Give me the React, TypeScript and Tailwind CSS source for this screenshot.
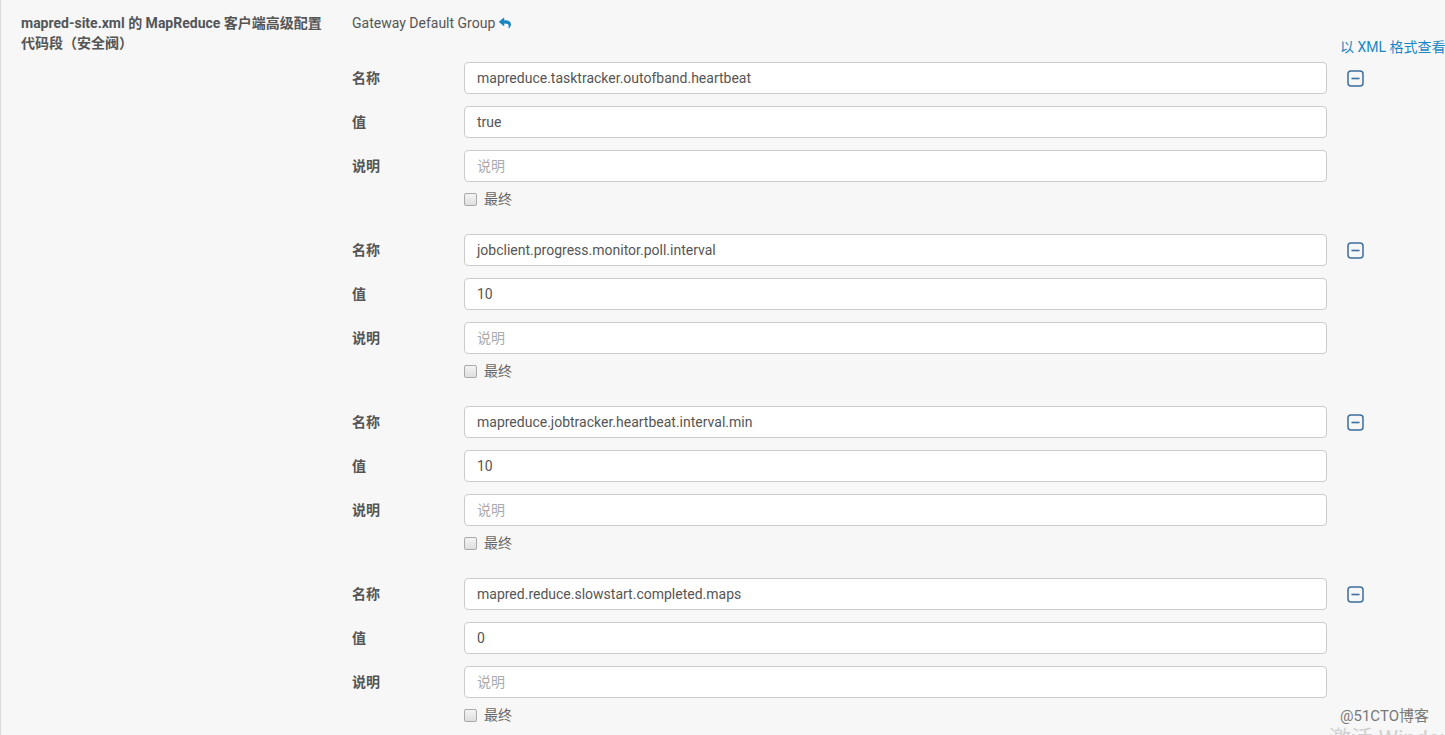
import { FaReply } from 'react-icons/fa';

type Entry = { name: string; value: string };

const entries: Entry[] = [
  { name: 'mapreduce.tasktracker.outofband.heartbeat', value: 'true' },
  { name: 'jobclient.progress.monitor.poll.interval', value: '10' },
  { name: 'mapreduce.jobtracker.heartbeat.interval.min', value: '10' },
  { name: 'mapred.reduce.slowstart.completed.maps', value: '0' },
];

function Field({ label, value, placeholder, action }: { label: string; value?: string; placeholder?: string; action?: boolean }) {
  return (
    <div className="flex items-center">
      <div className="w-[112px] text-[14px] font-bold text-[#555]">{label}</div>
      <div className="flex h-[32px] w-[863px] items-center rounded-[4px] border border-[#ccc] bg-white px-[12px] text-[14px]">
        {value ? <span className="text-[#555]">{value}</span> : <span className="text-[#aaa]">{placeholder}</span>}
      </div>
      {action && (
        <svg className="ml-[20px]" width="17" height="17" viewBox="0 0 17 17">
          <rect x="1" y="1" width="15" height="15" rx="3" fill="none" stroke="#3d6e9e" strokeWidth="1.5" />
          <line x1="4.5" y1="8.5" x2="12.5" y2="8.5" stroke="#3d6e9e" strokeWidth="1.6" />
        </svg>
      )}
    </div>
  );
}

function Group({ entry }: { entry: Entry }) {
  return (
    <div className="flex flex-col">
      <div className="flex flex-col gap-[12px]">
        <Field label="名称" value={entry.name} action />
        <Field label="值" value={entry.value} />
        <Field label="说明" placeholder="说明" />
      </div>
      <label className="ml-[112px] mt-[8px] flex h-[18px] items-center gap-[7px] text-[14px] text-[#666]">
        <span className="h-[13px] w-[13px] rounded-[2px] border border-[#a9a9a9] bg-gradient-to-b from-[#f4f4f4] to-[#dedede]" />
        最终
      </label>
    </div>
  );
}

export default function App() {
  return (
    <div
      className="relative flex h-[735px] w-[1445px] overflow-hidden border-l border-[#d9d9d9] bg-[#f7f7f7]"
      style={{ fontFamily: 'Roboto, "Noto Sans CJK SC", sans-serif' }}
    >
      <div className="w-[351px] shrink-0 pl-[20px] pt-[13px] text-[14px] font-bold leading-[20px] text-[#555]">
        mapred-site.xml 的 MapReduce 客户端高级配置
        <br />
        代码段（安全阀）
      </div>
      <div className="flex flex-col pt-[13px]">
        <div className="flex h-[20px] items-center gap-[4px] text-[14px] text-[#555]">
          Gateway Default Group
          <FaReply className="h-[12px] w-[12px] text-[#1a86c4]" />
        </div>
        <div className="ml-[988px] mt-[4px] h-[20px] whitespace-nowrap text-[14px] leading-[20px] text-[#1a86c4]">
          以 XML 格式查看
        </div>
        <div className="mt-[5px] flex flex-col gap-[26px]">
          {entries.map((e) => (
            <Group key={e.name} entry={e} />
          ))}
        </div>
      </div>
      <div className="absolute left-[1339px] top-[705px] text-[15px] text-[#777]">@51CTO博客</div>
      <div className="absolute left-[1328px] top-[722px] whitespace-nowrap text-[22px] text-[#d0d0d0]">激活 Windows</div>
    </div>
  );
}
